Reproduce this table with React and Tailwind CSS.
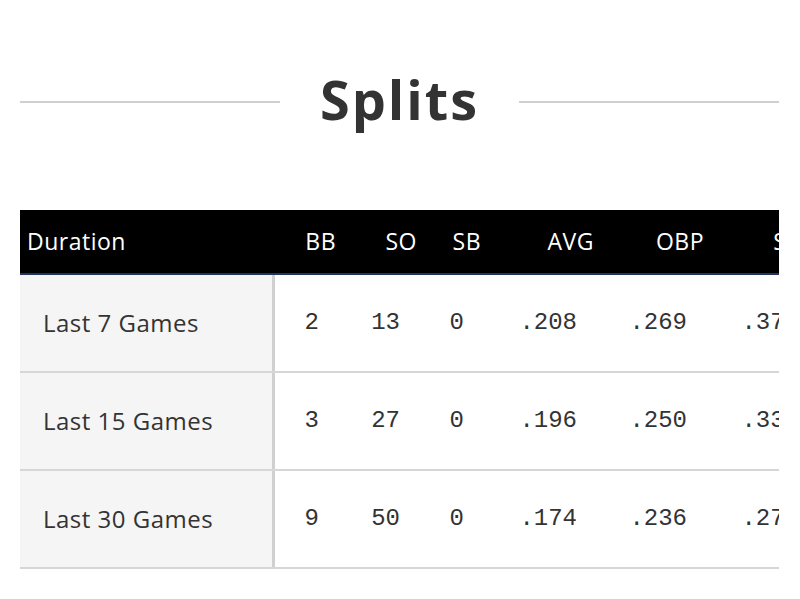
const columns = [
	{ key: "bb", label: "BB", width: "w-[71px]" },
	{ key: "so", label: "SO", width: "w-[81px]" },
	{ key: "sb", label: "SB", width: "w-[64px]" },
	{ key: "avg", label: "AVG", width: "w-[113px]" },
	{ key: "obp", label: "OBP", width: "w-[110px]" },
	{ key: "slg", label: "SLG", width: "w-[112px]" },
	{ key: "ops", label: "OPS", width: "w-[110px]" },
];

const rows = [
	{ duration: "Last 7 Games", bb: "2", so: "13", sb: "0", avg: ".208", obp: ".269", slg: ".375", ops: ".644" },
	{ duration: "Last 15 Games", bb: "3", so: "27", sb: "0", avg: ".196", obp: ".250", slg: ".337", ops: ".587" },
	{ duration: "Last 30 Games", bb: "9", so: "50", sb: "0", avg: ".174", obp: ".236", slg: ".277", ops: ".513" },
];

const App = () => {
	return (
		<div className="min-h-[599px] bg-white pl-[20px] pr-[21px] font-['Open_Sans',sans-serif] text-[#333]">
			{/* Title */}
			<div className="flex items-center gap-[40px] pt-[72px]">
				<div className="mt-[6px] h-[2px] flex-1 bg-[#d0d0d0]" />
				<h1 className="text-[54px] leading-none font-bold tracking-[2px] text-[#333]">
					Splits
				</h1>
				<div className="mt-[6px] h-[2px] flex-1 bg-[#d0d0d0]" />
			</div>

			{/* Table */}
			<div className="mt-[84px] overflow-hidden">
				<div className="w-max">
					<div className="flex h-[65px] items-center border-b-2 border-[#22355e] bg-black text-[23px] tracking-[0.5px] text-white">
						<div className="w-[255px] shrink-0 pl-[7px]">Duration</div>
						{columns.map((c) => (
							<div key={c.key} className={`${c.width} shrink-0 pr-[10px] text-right`}>
								{c.label}
							</div>
						))}
					</div>

					{rows.map((r) => (
						<div key={r.duration} className="flex h-[98px] border-b-2 border-[#d6d6d6]">
							<div className="flex w-[255px] shrink-0 items-center border-r-[3px] border-[#d0d0d0] bg-[#f5f5f5] pl-[23px] text-[24px] tracking-[0.5px]">
								{r.duration}
							</div>
							{columns.map((c) => (
								<div
									key={c.key}
									className={`${c.width} flex shrink-0 items-center justify-end pr-[27px] font-['Liberation_Mono',monospace] text-[24px]`}
								>
									{r[c.key]}
								</div>
							))}
						</div>
					))}
				</div>
			</div>
		</div>
	);
};

export default App;
